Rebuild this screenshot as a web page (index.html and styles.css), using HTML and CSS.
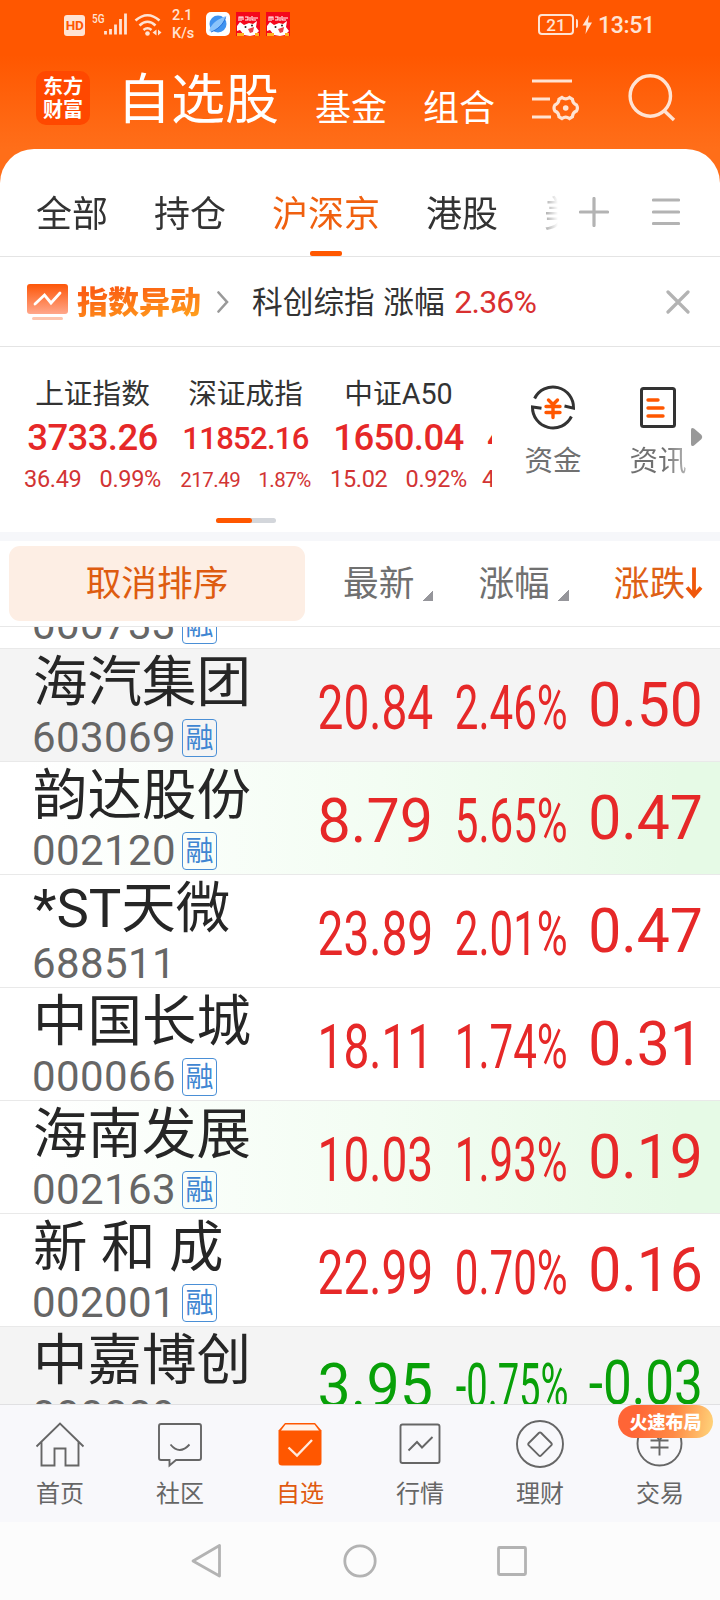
FILE: index.html
```html
<!DOCTYPE html>
<html lang="zh-CN">
<head>
    <meta charset="UTF-8">
    <meta name="viewport" content="width=device-width, initial-scale=1.0">
    <title>自选股</title>
    <link rel="stylesheet" href="styles.css">
</head>
<body>
    <header class="header">
        <div class="status">
            <span class="hd">HD</span>
            <svg class="signal" width="36" height="26" viewBox="0 0 36 26">
                <text x="0" y="11" class="net" textLength="12.5" lengthAdjust="spacingAndGlyphs">5G</text>
                <path d="M13.500 19v3.500M18.500 17v5.500M23.500 12.500v10M28.500 7v15.500M33.500 1.500v21" />
            </svg>
            <svg class="wifi" width="28" height="24" viewBox="0 0 28 24">
                <path d="M1.500 7.500Q13.500-3 25.500 7.500M5.500 12.500Q13.500 5 21.500 12.500M9.500 17Q13.500 13.500 17.500 17" />
                <circle cx="13.500" cy="20.500" r="2.300" />
                <path class="solid" d="M22.500 16.500v6l-4-3zM24 16.500v6l3.500-3z" />
            </svg>
            <span class="speed">2.1<br>K/s</span>
            <svg class="app-browser" width="24" height="24" viewBox="0 0 24 24">
                <rect width="24" height="24" rx="5" fill="#fff" />
                <circle cx="12" cy="12" r="8.500" fill="#3f93f0" />
                <path d="M5 19.500C1 20 6 11 12.500 7.500S22 3 19.500 6C17 12 10 19 5 19.500z" fill="#8ac4fb" />
                <path d="M5 20C11 18 18 12 19.500 5.500" fill="none" stroke="#2873dc" />
            </svg>
            <svg class="app-shop" width="24" height="24" viewBox="0 0 24 24">
                <rect width="24" height="24" fill="#f5071c" />
                <path d="M3 9V5h4v3M5 5v4M9 5h3v3H9M14 5v4M16 4v4h4M17 6h5" fill="none" stroke="#fff" stroke-width="1.100" />
                <path d="M1 14l3-4 4 3 5-2 4 1 4-3-1 6 3 4-4 4-5 1-6-1-4-5-3 1z" fill="#fff" />
                <path d="M12 17l6-2-1 5-3 1z" fill="#e84048" />
                <circle cx="9.500" cy="15" r="1" fill="#222" /><circle cx="16" cy="13.500" r="1" fill="#222" />
                <path d="M1 21h7v3H1zM19 21h4v3h-4z" fill="#ffb321" />
            </svg>
            <svg class="app-shop" width="24" height="24" viewBox="0 0 24 24">
                <rect width="24" height="24" fill="#f5071c" />
                <path d="M3 9V5h4v3M5 5v4M9 5h3v3H9M14 5v4M16 4v4h4M17 6h5" fill="none" stroke="#fff" stroke-width="1.100" />
                <path d="M1 14l3-4 4 3 5-2 4 1 4-3-1 6 3 4-4 4-5 1-6-1-4-5-3 1z" fill="#fff" />
                <path d="M12 17l6-2-1 5-3 1z" fill="#e84048" />
                <circle cx="9.500" cy="15" r="1" fill="#222" /><circle cx="16" cy="13.500" r="1" fill="#222" />
                <path d="M1 21h7v3H1zM19 21h4v3h-4z" fill="#ffb321" />
            </svg>
            <span class="battery">21</span>
            <svg class="bolt" width="18" height="22" viewBox="0 0 18 22">
                <path d="M1 6q2 0 2 2v5q0 2-2 2z" />
                <path d="M14 2L7.500 12.500h4L10.500 21 17 9.500h-4z" />
            </svg>
            <span class="time">13:51</span>
        </div>
        <div class="top">
            <div class="logo">东方<br>财富</div>
            <h1>自选股</h1>
            <span class="top-link">基金</span>
            <span class="top-link">组合</span>
            <svg class="filter" width="48" height="44" viewBox="0 0 48 44">
                <path d="M0 4h40M0 22h18M0 40h19" />
                <path d="M30 20.500q3.700 2.600 7.400 0l3 1.800q.4 4.200 4 5.600 2 3.100 0 6.200-3.600 1.400-4 5.600l-3 1.800q-3.700-2.600-7.400 0l-3-1.800q-.4-4.200-4-5.600-2-3.100 0-6.200 3.600-1.400 4-5.600z" />
                <circle cx="33.700" cy="31" r="2.800" />
            </svg>
            <svg class="search" width="48" height="48" viewBox="0 0 48 48">
                <circle cx="22.300" cy="22" r="20.200" />
                <path d="M36 36.500l10 9.500" />
            </svg>
        </div>
    </header>

    <main class="panel">
        <nav class="tabs">
            <div class="tab-list">
                <span class="tab">全部</span>
                <span class="tab">持仓</span>
                <span class="tab active">沪深京</span>
                <span class="tab">港股</span>
                <span class="tab">美股</span>
            </div>
            <svg class="gray-icon plus" width="30" height="30" viewBox="0 0 30 30"><path d="M1.500 15h27M15 1.500v27" /></svg>
            <svg class="gray-icon menu" width="28" height="30" viewBox="0 0 28 30"><path d="M1.500 3h25M1.500 15h25M1.500 26.500h25" /></svg>
        </nav>

        <section class="alert">
            <svg class="alert-icon" width="41" height="36" viewBox="0 0 41 36">
                <defs>
                    <linearGradient id="board" x1="0" y1="0" x2="0" y2="1">
                        <stop offset="0" stop-color="#fd5608" />
                        <stop offset="1" stop-color="#ffa78b" />
                    </linearGradient>
                </defs>
                <rect width="41" height="30" rx="3" fill="url(#board)" />
                <path d="M8 20l9.500-9 6.500 8L33 9" fill="none" stroke="#fff" stroke-width="2.800" stroke-linecap="round" />
                <path d="M6.500 34.500h28" stroke="#fdc5ae" stroke-width="3" stroke-linecap="round" />
            </svg>
            <span class="alert-title">指数异动</span>
            <svg class="gray-icon chevron" width="12" height="22" viewBox="0 0 12 22"><path d="M1.500 1.500l8.500 9.500-8.500 9.500" /></svg>
            <span class="alert-text">科创综指 涨幅 <b>2.36%</b></span>
            <svg class="gray-icon close" width="24" height="24" viewBox="0 0 24 24"><path d="M2 2l20 20M22 2L2 22" /></svg>
        </section>

        <section class="indices">
            <div class="carousel">
                <div class="slides">
                    <div class="index">
                        <div class="index-name">上证指数</div>
                        <div class="index-price">3733.26</div>
                        <div class="index-change"><span>36.49</span><span>0.99%</span></div>
                    </div>
                    <div class="index long">
                        <div class="index-name">深证成指</div>
                        <div class="index-price">11852.16</div>
                        <div class="index-change"><span>217.49</span><span>1.87%</span></div>
                    </div>
                    <div class="index">
                        <div class="index-name">中证A50</div>
                        <div class="index-price">1650.04</div>
                        <div class="index-change"><span>15.02</span><span>0.92%</span></div>
                    </div>
                    <div class="index next">
                        <div class="index-name"></div>
                        <div class="index-price">4</div>
                        <div class="index-change"><span>4</span></div>
                    </div>
                </div>
                <div class="pager"><i></i></div>
            </div>
            <div class="shortcut">
                <svg width="48" height="48" viewBox="0 0 48 48">
                    <path class="ring" d="M5.600 15.500A20.500 20.500 0 0 1 44.500 25.200L35.500 23M42.400 33.500A20.500 20.500 0 0 1 3.500 24L12.500 25.200" />
                    <path class="mark" d="M19.500 17l4.500 4.500 4.500-4.500M17 23.500h14M17 29.500h14M24 22v12.500" />
                </svg>
                <span>资金</span>
            </div>
            <div class="shortcut fade">
                <svg width="48" height="48" viewBox="0 0 48 48">
                    <rect class="ring" x="7.500" y="5.500" width="33" height="38" rx="2" />
                    <path class="mark" d="M14 17h10M14 25h15M14 33h15" />
                </svg>
                <span>资讯</span>
            </div>
            <svg class="more" width="12" height="20" viewBox="0 0 12 20"><path d="M0 3Q0 0 3 1.500L10.500 8q1.500 2 0 4L3 18.500Q0 20 0 17z" /></svg>
        </section>

        <div class="sort">
            <button class="cancel">取消排序</button>
            <span class="sort-col price">最新<i></i></span>
            <span class="sort-col rate">涨幅<i></i></span>
            <span class="sort-col diff">涨跌<svg width="18" height="34" viewBox="0 0 18 34"><path d="M9 1.500v28M2 21.500l7 8 7-8" /></svg></span>
        </div>

        <div class="stocks">
            <div class="stock first">
                <div class="name"></div>
                <div class="code">000733<em>融</em></div>
            </div>
            <div class="stock gray">
                <div class="name">海汽集团</div>
                <div class="code">603069<em>融</em></div>
                <span class="num price narrow">20.84</span>
                <span class="num rate">2.46%</span>
                <span class="num diff">0.50</span>
            </div>
            <div class="stock green">
                <div class="name">韵达股份</div>
                <div class="code">002120<em>融</em></div>
                <span class="num price">8.79</span>
                <span class="num rate">5.65%</span>
                <span class="num diff">0.47</span>
            </div>
            <div class="stock">
                <div class="name">*ST天微</div>
                <div class="code">688511</div>
                <span class="num price narrow">23.89</span>
                <span class="num rate">2.01%</span>
                <span class="num diff">0.47</span>
            </div>
            <div class="stock">
                <div class="name">中国长城</div>
                <div class="code">000066<em>融</em></div>
                <span class="num price narrow">18.11</span>
                <span class="num rate">1.74%</span>
                <span class="num diff">0.31</span>
            </div>
            <div class="stock green">
                <div class="name">海南发展</div>
                <div class="code">002163<em>融</em></div>
                <span class="num price narrow">10.03</span>
                <span class="num rate">1.93%</span>
                <span class="num diff">0.19</span>
            </div>
            <div class="stock">
                <div class="name">新 和 成</div>
                <div class="code">002001<em>融</em></div>
                <span class="num price narrow">22.99</span>
                <span class="num rate">0.70%</span>
                <span class="num diff">0.16</span>
            </div>
            <div class="stock gray down">
                <div class="name">中嘉博创</div>
                <div class="code">000889</div>
                <span class="num price">3.95</span>
                <span class="num rate">-0.75%</span>
                <span class="num diff">-0.03</span>
            </div>
        </div>
    </main>

    <nav class="tabbar">
        <div class="item">
            <svg width="50" height="50" viewBox="0 0 50 50"><path d="M1.500 27.500L25 4.500l23.500 23M6.500 23v23.500h13v-17h11v17H43.500V23" /></svg>
            <span>首页</span>
        </div>
        <div class="item">
            <svg width="50" height="50" viewBox="0 0 50 50"><path d="M6 5h38q2 0 2 2v32q0 2-2 2H21l-6.500 5.500V41H6q-2 0-2-2V7q0-2 2-2zM15.500 25.500q9 11 19 0" /></svg>
            <span>社区</span>
        </div>
        <div class="item on">
            <svg width="50" height="50" viewBox="0 0 50 50">
                <path class="box" d="M10 4h30l6.500 7.500V43q0 3.500-3.500 3.500H7Q3.500 46.500 3.500 43V11.500z" />
                <path class="lid" d="M10.500 5.500h29l4.500 6H6z" />
                <path class="tick" d="M13.500 28.500l8.500 8L37 21" />
            </svg>
            <span>自选</span>
        </div>
        <div class="item">
            <svg width="50" height="50" viewBox="0 0 50 50"><rect x="5.500" y="5.500" width="39" height="38.500" rx="2" /><path d="M13.500 31.500l8.500-8.500 5 5.500L37.500 18" /></svg>
            <span>行情</span>
        </div>
        <div class="item">
            <svg width="50" height="50" viewBox="0 0 50 50"><circle cx="25" cy="25" r="23" /><path d="M23.800 14q1.200-1.200 2.400 0l10 10q1.200 1.200 0 2.400l-10 10q-1.200 1.200-2.400 0l-10-10q-1.200-1.200 0-2.400z" /></svg>
            <span>理财</span>
        </div>
        <div class="item">
            <svg width="50" height="50" viewBox="0 0 50 50"><circle cx="24.500" cy="24.500" r="22" /><path d="M18 13l6.500 8 6.500-8M15.500 21.500h18M15.500 28.500h18M24.500 21v15.500" /></svg>
            <span>交易</span>
            <b class="promo">火速布局</b>
        </div>
    </nav>

    <div class="sysnav">
        <svg width="34" height="36" viewBox="0 0 34 36"><path d="M29.500 2.500v30.500L3 18z" /></svg>
        <svg width="34" height="36" viewBox="0 0 34 36"><circle cx="17" cy="18" r="15.200" /></svg>
        <svg width="34" height="36" viewBox="0 0 34 36"><rect x="3.500" y="4.500" width="27" height="27" rx="1" /></svg>
    </div>
</body>
</html>
```

FILE: styles.css
```css
* {
    box-sizing: border-box;
}
body {
    margin: 0;
    width: 720px;
    height: 1600px;
    overflow: hidden;
    display: flex;
    flex-direction: column;
    font-family: Roboto, "Noto Sans CJK SC", sans-serif;
    color: #333;
    background: #ff6e19;
}
svg {
    display: block;
    flex: none;
    fill: none;
}

/* header */
.header {
    height: 149px;
    flex: none;
    color: #fff;
    background: linear-gradient(#ff5700 55px, #ff6b16 135px, #ff6e19);
}
.status {
    display: flex;
    align-items: center;
    height: 48px;
    padding-left: 64px;
    color: #ffe3d3;
}
.hd {
    width: 21px;
    height: 21px;
    margin-top: 2px;
    border-radius: 3px;
    background: #ffe3d3;
    color: #ff5700;
    font-size: 13.500px;
    font-weight: 700;
    letter-spacing: -0.500px;
    line-height: 21px;
    text-align: center;
}
.signal {
    margin: 2px 0 0 7px;
    overflow: visible;
    stroke: #ffe3d3;
    stroke-width: 2.800;
}
.signal .net {
    fill: #ffe3d3;
    stroke: none;
    font-size: 13.500px;
    font-weight: 500;
}
.wifi {
    margin: 2px 0 0 6px;
    stroke: #ffe3d3;
    stroke-width: 2.600;
}
.wifi circle,
.wifi .solid {
    fill: #ffe3d3;
    stroke: none;
}
.speed {
    width: 24px;
    margin: 1px 0 0 10px;
    font-size: 14.500px;
    font-weight: 500;
    line-height: 18px;
    white-space: nowrap;
}
.app-browser {
    margin-left: 10px;
}
.app-shop {
    margin-left: 6px;
}
.battery {
    width: 36px;
    height: 21px;
    margin-left: 248px;
    border: 2px solid #ffe3d3;
    border-radius: 4px;
    font-size: 17px;
    font-weight: 500;
    line-height: 18px;
    text-align: center;
}
.bolt {
    margin-left: 1px;
    fill: #ffe3d3;
}
.time {
    margin: 2px 0 0 5px;
    font-size: 23px;
    font-weight: 500;
    letter-spacing: -0.300px;
}
.top {
    display: flex;
    align-items: center;
    height: 75px;
    margin-top: 12px;
    padding-left: 36px;
}
.logo {
    width: 54px;
    height: 54px;
    padding-top: 5px;
    border-radius: 10px;
    background: #ff4800;
    font-size: 20px;
    font-weight: 700;
    line-height: 23px;
    text-align: center;
}
h1 {
    margin: 6px 0 0 27px;
    font-size: 54px;
    font-weight: 400;
    line-height: 60px;
}
.top-link {
    width: 72px;
    margin: 23px 0 0 36px;
    font-size: 36px;
    line-height: 40px;
}
.filter {
    margin: 2px 0 0 37px;
    stroke: #ffe3d3;
    stroke-width: 3.200;
}
.filter circle {
    fill: #ffe3d3;
    stroke: none;
}
.search {
    margin: 1px 0 0 48px;
    stroke: #ffe3d3;
    stroke-width: 3.400;
}

/* white panel */
.panel {
    display: flex;
    flex-direction: column;
    height: 1255px;
    flex: none;
    border-radius: 34px 34px 0 0;
    background: #fff;
    overflow: hidden;
}
.gray-icon {
    stroke: #b3b3b3;
    stroke-width: 3.200;
    stroke-linecap: round;
}
.tabs {
    display: flex;
    height: 108px;
    flex: none;
    padding-left: 36px;
    border-bottom: 1px solid #e4e4e4;
}
.tab-list {
    display: flex;
    gap: 46px;
    width: 522px;
    overflow: hidden;
    font-size: 36px;
    line-height: 40px;
    -webkit-mask-image: linear-gradient(to right, #000 490px, transparent 522px);
    mask-image: linear-gradient(to right, #000 490px, transparent 522px);
}
.tab {
    flex: none;
    padding-top: 46px;
}
.tab.active {
    color: #f0600f;
    display: flex;
    flex-direction: column;
    align-items: center;
}
.tab.active::after {
    content: "";
    width: 32px;
    height: 5px;
    margin-top: 16px;
    border-radius: 2px;
    background: #ff5700;
}
.plus {
    margin: 48px 0 0 21px;
}
.menu {
    margin: 48px 0 0 43px;
}
.alert {
    display: flex;
    align-items: center;
    height: 90px;
    flex: none;
    padding: 0 30px 0 27px;
    border-bottom: 1px solid #e4e4e4;
}
.alert-title {
    width: 126px;
    margin: 3px 0 0 9px;
    font-size: 31px;
    font-weight: 900;
    line-height: 40px;
    color: transparent;
    background: linear-gradient(170deg, #fb5f13 20%, #ff9d1c 85%);
    -webkit-background-clip: text;
    background-clip: text;
}
.chevron {
    margin-left: 14px;
    stroke: #999;
    stroke-width: 2.600;
}
.alert-text {
    margin: 2px 0 0 23px;
    font-size: 30.700px;
    line-height: 40px;
    word-spacing: 1px;
    white-space: nowrap;
}
.alert-text b {
    margin-left: 1px;
    font-size: 32px;
    font-weight: 400;
    letter-spacing: -0.800px;
    color: #d93030;
}
.close {
    margin-left: auto;
}
.indices {
    display: flex;
    height: 194px;
    flex: none;
    border-bottom: 9px solid #f6f7fa;
}
.carousel {
    width: 492px;
    padding-left: 16px;
    overflow: hidden;
}
.slides {
    display: flex;
    height: 171px;
    padding-top: 27px;
}
.index {
    width: 153px;
    flex: none;
    text-align: center;
    color: #d23434;
}
.index-name {
    height: 40px;
    font-size: 28.700px;
    line-height: 40px;
    color: #333;
}
.index-price {
    height: 45px;
    font-size: 36.500px;
    font-weight: 500;
    letter-spacing: -0.600px;
    line-height: 47px;
    color: #e62828;
}
.index-change {
    display: flex;
    justify-content: center;
    gap: 18px;
    font-size: 23.500px;
    letter-spacing: -0.300px;
    line-height: 40px;
}
.long .index-price {
    font-size: 31px;
    letter-spacing: -0.700px;
    line-height: 49px;
}
.long .index-change {
    font-size: 20.500px;
    letter-spacing: -0.500px;
    line-height: 42px;
}
.next .index-price {
    padding-left: 12px;
    text-align: left;
}
.next .index-change {
    justify-content: flex-start;
    padding-left: 7px;
}
.pager {
    width: 60px;
    height: 5px;
    margin-left: 200px;
    border-radius: 3px;
    background: #d3d6db;
}
.pager i {
    display: block;
    width: 36px;
    height: 5px;
    border-radius: 3px;
    background: #ff5700;
}
.shortcut {
    display: flex;
    flex-direction: column;
    align-items: center;
    width: 58px;
    margin: 36px 0 0 32px;
    font-size: 28.500px;
    line-height: 40px;
    color: #707070;
    white-space: nowrap;
}
.shortcut + .shortcut {
    margin-left: 47px;
}
.shortcut span {
    margin-top: 11px;
}
.shortcut.fade span {
    background: linear-gradient(to right, #707070 60%, #b5b5b5);
    -webkit-background-clip: text;
    background-clip: text;
    color: transparent;
}
.shortcut .ring {
    stroke: #333;
    stroke-width: 3;
}
.shortcut .mark {
    stroke: #ff5700;
    stroke-width: 3.400;
    stroke-linecap: round;
}
.more {
    margin: 80px 0 0 4px;
    fill: #999;
}

/* sort header */
.sort {
    display: flex;
    align-items: center;
    height: 86px;
    flex: none;
    padding-left: 9px;
    border-bottom: 1px solid #e8e8e8;
    font-size: 35.700px;
    line-height: 40px;
    color: #707070;
}
.cancel {
    width: 296px;
    height: 75px;
    padding: 0;
    border: 0;
    border-radius: 11px;
    background: #fdeee4;
    color: #de5c10;
    font: inherit;
}
.sort-col {
    display: flex;
    align-items: center;
    margin-top: 1px;
}
.sort-col.price {
    margin-left: 38px;
}
.sort-col.rate {
    margin-left: 45px;
}
.sort-col.diff {
    margin-left: 45px;
    color: #de6015;
}
.sort-col i {
    width: 11px;
    height: 11px;
    margin: 22px 0 0 8px;
    background: linear-gradient(135deg, transparent 50%, #96969b 50%);
}
.sort-col svg {
    margin-top: -2px;
    stroke: #f0570a;
    stroke-width: 3.800;
}

/* stock list */
.stocks {
    flex: 1;
    overflow: hidden;
}
.stock {
    display: grid;
    grid-template-columns: 270px 163px 135px 135px;
    grid-template-rows: 66px 46px;
    height: 113px;
    border-bottom: 1px solid #e9e9e9;
    color: #e62828;
}
.stock.first {
    margin-top: -91px;
}
.stock.gray {
    background: #f4f4f4;
}
.stock.green {
    background: linear-gradient(to right, #fff 30px, #f3fdf3 380px, #e6fae6 680px);
}
.stock.down {
    color: #08a008;
}
.name {
    padding: 1px 0 0 33px;
    font-size: 54.500px;
    line-height: 64px;
    color: #262626;
    white-space: nowrap;
}
.code {
    grid-row: 2;
    grid-column: 1;
    display: flex;
    align-items: center;
    padding-left: 32px;
    font-size: 42px;
    letter-spacing: 0.400px;
    line-height: 46px;
    color: #666;
}
.code em {
    width: 35px;
    height: 38px;
    margin-left: 6px;
    border: 1px solid #4a8fd6;
    border-radius: 4px;
    font-size: 28px;
    font-style: normal;
    letter-spacing: 0;
    line-height: 38px;
    text-align: center;
    color: #3f86d2;
}
.num {
    grid-row: 1 / 3;
    justify-self: end;
    align-self: center;
    margin-top: 5px;
    font-size: 61px;
    line-height: 60px;
    transform-origin: right;
}
.num.price {
    grid-column: 2;
    transform: scaleX(0.970);
}
.num.price.narrow {
    transform: scaleX(0.755);
}
.num.rate {
    grid-column: 3;
    transform: scaleX(0.690);
}
.num.diff {
    grid-column: 4;
    margin-top: -1px;
    transform: scaleX(0.965);
}
.down .num.rate {
    transform: scaleX(0.625);
}
.down .num.diff {
    transform: scaleX(0.840);
}

/* bottom bars */
.tabbar {
    display: flex;
    height: 118px;
    flex: none;
    border-top: 1px solid #e0e0e2;
    background: #f8f8fb;
}
.item {
    position: relative;
    display: flex;
    flex-direction: column;
    align-items: center;
    width: 120px;
    padding-top: 14px;
    font-size: 24px;
    line-height: 30px;
    color: #666;
}
.item svg {
    stroke: #666;
    stroke-width: 1.900;
}
.item span {
    margin-top: 10px;
}
.item.on {
    color: #e05a10;
}
.item .box {
    fill: #ff5700;
    stroke: none;
}
.item .lid {
    fill: #fff3ea;
    stroke: none;
}
.item .tick {
    stroke: #ffe9dd;
    stroke-width: 2.400;
}
.promo {
    position: absolute;
    top: 0;
    left: 18px;
    width: 95px;
    height: 33px;
    border-radius: 17px;
    background: linear-gradient(100deg, #ff6536 20%, #ff8a45 60%, #ffd67c);
    color: #fff;
    font-size: 18px;
    font-weight: 900;
    line-height: 36px;
    text-align: center;
}
.sysnav {
    display: flex;
    justify-content: space-between;
    height: 78px;
    flex: none;
    padding: 21px 191px 0 190px;
    background: #fcfcfc;
}
.sysnav svg {
    stroke: #b3b3b3;
    stroke-width: 2.800;
    stroke-linejoin: round;
}
```
